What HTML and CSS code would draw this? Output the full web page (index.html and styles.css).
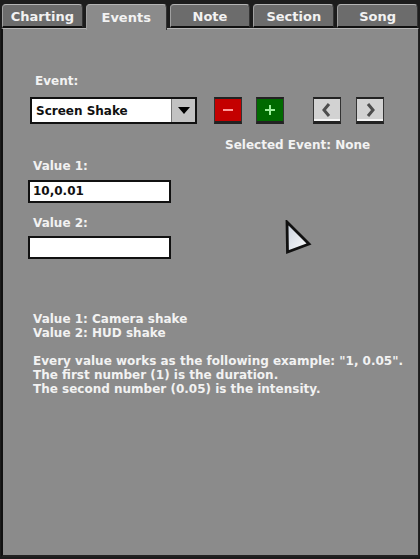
FILE: index.html
```html
<!DOCTYPE html>
<html>
<head>
<meta charset="utf-8">
<link rel="stylesheet" href="styles.css">
</head>
<body>
<div class="tabs">
  <div class="tab">Charting</div>
  <div class="tab active">Events</div>
  <div class="tab">Note</div>
  <div class="tab">Section</div>
  <div class="tab">Song</div>
</div>
<div class="panel">
  <div class="label event-label">Event:</div>
  <div class="event-row">
    <div class="dropdown">
      <span class="dd-text">Screen Shake</span>
      <span class="dd-btn"><svg width="12" height="7" viewBox="0 0 12 7"><path d="M0 0H12L6 7Z" fill="#000"/></svg></span>
    </div>
    <div class="btn red"><svg width="12" height="4" viewBox="0 0 12 4"><rect x="1" y="1" width="10" height="2" fill="#ff9a9a"/></svg></div>
    <div class="btn green"><svg width="12" height="12" viewBox="0 0 12 12"><rect x="1" y="5" width="10" height="2" fill="#9cf09c"/><rect x="5" y="1" width="2" height="10" fill="#9cf09c"/></svg></div>
    <div class="btn gray first-nav"><svg width="10" height="14" viewBox="0 0 10 14"><path d="M7 1L2 7L7 13" stroke="#4d4d4d" stroke-width="3" fill="none"/></svg></div>
    <div class="btn gray"><svg width="10" height="14" viewBox="0 0 10 14"><path d="M3 1L8 7L3 13" stroke="#4d4d4d" stroke-width="3" fill="none"/></svg></div>
  </div>
  <div class="label selected">Selected Event: None</div>
  <div class="label value-label">Value 1:</div>
  <div class="input">10,0.01</div>
  <div class="label value-label second">Value 2:</div>
  <div class="input second-input"></div>
  <div class="label desc">Value 1: Camera shake<br>Value 2: HUD shake<br><br>Every value works as the following example: "1, 0.05".<br>The first number (1) is the duration.<br>The second number (0.05) is the intensity.</div>
  <svg class="cursor" width="28" height="36" viewBox="0 0 28 36">
    <defs><linearGradient id="g" x1="0" y1="0" x2="1" y2="1"><stop offset="0" stop-color="#c8d0dc"/><stop offset="1" stop-color="#ffffff"/></linearGradient></defs>
    <path d="M2 2L2.5 32L24 24Z" fill="url(#g)" stroke="#111" stroke-width="2.8" stroke-linejoin="miter"/>
  </svg>
</div>
</body>
</html>
```
FILE: styles.css
```css
html, body {
  margin: 0;
  padding: 0;
  background: #1c1c1c;
  height: 100%;
  overflow: hidden;
}
body {
  font-family: "DejaVu Sans", sans-serif;
  font-weight: bold;
  font-size: 12px;
  color: #f2f2f2;
}
.tabs {
  display: flex;
  gap: 3px;
  padding: 4px 2px 0 2px;
  height: 24px;
}
.tab {
  flex: 1;
  box-sizing: border-box;
  height: 24px;
  padding-top: 1px;
  background: #6c6c6c;
  border-top: 1px solid #b4b4b4;
  border-left: 1px solid #a0a0a0;
  border-right: 1px solid #333;
  border-bottom: 2px solid #111;
  border-radius: 4px 4px 0 0;
  display: flex;
  align-items: center;
  justify-content: center;
  font-size: 13px;
}
.tab.active {
  background: #8b8b8b;
  border-bottom: none;
  height: 26px;
  padding-bottom: 2px;
  position: relative;
  z-index: 1;
  margin-bottom: -2px;
}
.panel {
  position: relative;
  box-sizing: border-box;
  margin: 0 1px 0 1px;
  height: 529px;
  background: #8b8b8b;
  border-top: 1px solid #b4b4b4;
  border-left: 2px solid #111;
  border-right: 1px solid #222;
  border-bottom: 2px solid #222;
  padding: 0 0 0 24px;
  display: flex;
  flex-direction: column;
  align-items: flex-start;
}
.label {
  line-height: 14px;
  white-space: nowrap;
  padding-top: 2px;
  margin-bottom: -2px;
}
.event-label {
  margin: 43px 0 -2px 8px;
}
.event-row {
  display: flex;
  align-items: center;
  margin-top: 11px;
  margin-left: 3px;
}
.dropdown {
  box-sizing: border-box;
  width: 167px;
  height: 27px;
  background: #fff;
  border: 2px solid #111;
  display: flex;
  align-items: center;
  justify-content: space-between;
  color: #111;
}
.dd-text {
  padding-left: 4px;
  padding-top: 1px;
}
.dd-btn {
  box-sizing: border-box;
  width: 24px;
  height: 23px;
  background: #c2c2c2;
  border-left: 1px solid #777;
  display: flex;
  align-items: center;
  justify-content: center;
}
.btn {
  box-sizing: border-box;
  width: 28px;
  height: 27px;
  border-top: 2px solid #222;
  border-bottom: 3px solid #222;
  border-left: 1px solid #333;
  border-right: 1px solid #333;
  display: flex;
  align-items: center;
  justify-content: center;
}
.red {
  background: #c40000;
  margin-left: 17px;
}
.green {
  background: #006a00;
  margin-left: 14px;
}
.gray {
  background: #d2d2d2;
  margin-left: 15px;
  box-shadow: inset 0 -2px 0 #f4f4f4;
}
.gray.first-nav {
  margin-left: 29px;
}
.selected {
  margin: 12px 0 -2px 198px;
}
.value-label {
  margin: 7px 0 -2px 6px;
}
.value-label.second {
  margin-top: 11px;
}
.input {
  box-sizing: border-box;
  width: 143px;
  height: 23px;
  margin: 9px 0 0 1px;
  background: #fff;
  border: 2px solid #111;
  color: #111;
  line-height: 19px;
  padding-left: 3px;
}
.second-input {
  margin-top: 8px;
}
.desc {
  margin: 51px 0 -2px 6px;
}
.cursor {
  position: absolute;
  left: 282px;
  top: 191px;
}
```
